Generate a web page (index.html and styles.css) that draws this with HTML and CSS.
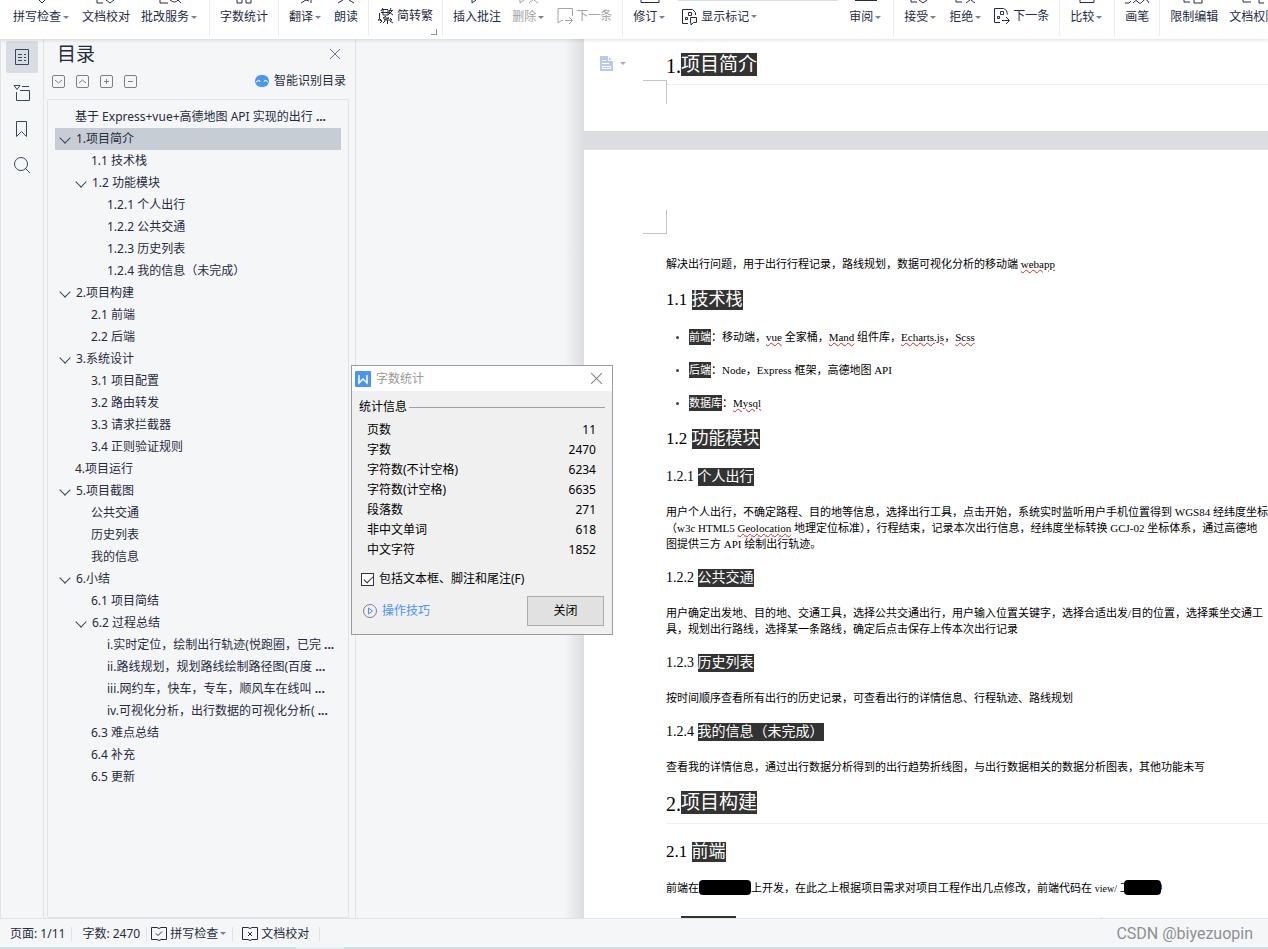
FILE: index.html
```html
<!DOCTYPE html>
<html lang="zh-CN">
<head>
<meta charset="utf-8">
<title>文档审阅</title>
<link rel="stylesheet" href="styles.css">
</head>
<body>
<header class="ribbon">
  <div class="group">
    <button class="tool"><svg class="stub" viewBox="0 0 24 4"><path d="M9 0l3 3 3-3"/></svg><span class="caret">拼写检查</span></button>
    <button class="tool"><svg class="stub" viewBox="0 0 24 4"><path d="M3 0v3h6M12 0l4 3 4-3"/></svg><span>文档校对</span></button>
    <button class="tool"><svg class="stub" viewBox="0 0 24 4"><path d="M2 0v3h8M12 0q5 4 8 0M20 0l3 3"/></svg><span class="caret">批改服务</span></button>
  </div>
  <div class="group">
    <button class="tool"><svg class="stub" viewBox="0 0 24 4"><path d="M5 0v3h5V0M14 0v3h5V0"/></svg><span>字数统计</span></button>
  </div>
  <div class="group">
    <button class="tool"><svg class="stub" viewBox="0 0 24 4"><path d="M7 3l5-3 3 1M17 0v3"/></svg><span class="caret">翻译</span></button>
    <button class="tool"><svg class="stub" viewBox="0 0 24 4"><path d="M4 3l5-3M15 0l5 3"/></svg><span>朗读</span></button>
  </div>
  <div class="group group-corner">
    <button class="tool tool-row"><svg class="ico" viewBox="0 0 16 16"><path d="M5 0L3 3M4 1.500h6M3 4.500h8M5 2v5h5V2M13 0l-2 4M11 2.500h4M14 3l-4 4M11 4l4 3M8 8L5 10h6l-5 2h8M12 10l2 2M9.500 12v4M7 13l-2 2M12 13l3 2M1.500 5v5q0 3 2 3M0 11l1 2M2 15l2-2-2-2"/></svg><span>简转繁</span></button>
  </div>
  <div class="group">
    <button class="tool"><svg class="stub" viewBox="0 0 24 4"><path d="M7 0v3l4-3"/></svg><span>插入批注</span></button>
    <button class="tool muted"><svg class="stub" viewBox="0 0 24 4"><path d="M3 0v3l4-3M12 3l4-3M17 0l4 3"/></svg><span class="caret">删除</span></button>
    <button class="tool tool-row muted"><svg class="ico" viewBox="0 0 16 16"><path d="M6 12.500H4.500L1 15V.5h14.500V8M8 12.500h7M12 9l3.500 3.500L12 16"/></svg><span>下一条</span></button>
  </div>
  <div class="group">
    <button class="tool"><svg class="stub" viewBox="0 0 24 4"><path d="M3 0v2.500h18V0"/></svg><span class="caret">修订</span></button>
    <div class="stack">
      <button class="tool tool-row"><svg class="ico" viewBox="0 0 16 16"><path d="M6 14.500H.5V.5h10l3 3V6M6.500 3.500h3v3h-3zM3.500 8.500h2v2h-2zM8.500 8.500h6v5h-3L9 16v-2.500h-.5z"/></svg><span class="caret">显示标记</span></button>
    </div>
    <button class="tool"><svg class="stub" viewBox="0 0 24 4"><path d="M1 0h22" stroke-width="2"/></svg><span class="caret">审阅</span></button>
  </div>
  <div class="group">
    <button class="tool"><svg class="stub" viewBox="0 0 24 4"><path d="M2 0v2h6M10 0l4 3 4-3"/></svg><span class="caret">接受</span></button>
    <button class="tool"><svg class="stub" viewBox="0 0 24 4"><path d="M2 0v2h6M12 3l4-3M17 0l4 3"/></svg><span class="caret">拒绝</span></button>
    <button class="tool tool-row"><svg class="ico" viewBox="0 0 16 16"><path d="M6 14.500H.5V.5h9q4 1 4 6M6.500 3.500h3v3h-3zM3.500 8.500h2v2h-2zM8 12.500h7M12 9l3.500 3.500L12 16"/></svg><span>下一条</span></button>
  </div>
  <div class="group">
    <button class="tool"><svg class="stub" viewBox="0 0 24 4"><path d="M5 0v2.500h14V0"/></svg><span class="caret">比较</span></button>
  </div>
  <div class="group">
    <button class="tool"><svg class="stub" viewBox="0 0 24 4"><path d="M0 3q5 1 6-2M8 3q3-4 5-1t5-1 6 2"/></svg><span>画笔</span></button>
  </div>
  <div class="group">
    <button class="tool"><svg class="stub" viewBox="0 0 24 4"><path d="M2 0v2h6M12 0v3h8V0"/></svg><span>限制编辑</span></button>
    <button class="tool"><svg class="stub" viewBox="0 0 24 4"><path d="M2 0v2h8M18 0v3h5"/></svg><span>文档权限</span></button>
  </div>
</header>

<div class="workspace">
  <nav class="rail" aria-label="侧栏">
    <button class="rail-btn active" aria-label="目录"><svg viewBox="0 0 18 18"><path d="M2.500 1.500h13v15h-13zM5 6.500h4M11 6.500h2M5 9.500h4M11 9.500h2M5 12.500h4M11 12.500h2"/></svg></button>
    <button class="rail-btn" aria-label="章节"><svg viewBox="0 0 18 18"><path d="M1 1.500h6L4 5.500zM3.500 8v8.500h13v-10H7M9 2.500h7"/></svg></button>
    <button class="rail-btn" aria-label="书签"><svg viewBox="0 0 18 18"><path d="M3.500 1.500h10v15l-5-5-5 5z"/></svg></button>
    <button class="rail-btn" aria-label="查找"><svg viewBox="0 0 18 18"><circle cx="8" cy="8" r="6.500"/><path d="M12 12l5 5"/></svg></button>
  </nav>

  <aside class="outline">
    <div class="outline-head">
      <h2 class="outline-title">目录</h2>
      <button class="close" aria-label="关闭目录"><svg viewBox="0 0 10 10"><path d="M0 0l10 10M10 0L0 10"/></svg></button>
    </div>
    <div class="outline-tools">
      <button class="sq" aria-label="展开"><svg viewBox="0 0 11 11"><path d="M2 4l3.500 3L9 4"/></svg></button>
      <button class="sq" aria-label="收起"><svg viewBox="0 0 11 11"><path d="M2 7l3.500-3L9 7"/></svg></button>
      <button class="sq" aria-label="增加"><svg viewBox="0 0 11 11"><path d="M3 5.500h5M5.500 3v5"/></svg></button>
      <button class="sq" aria-label="减少"><svg viewBox="0 0 11 11"><path d="M3 5.500h5"/></svg></button>
      <button class="smart"><svg viewBox="0 0 14 12"><rect width="14" height="12" rx="6" fill="#4a96f0"/><path d="M1 7l3-2 1 2M9 7l1-2 3 2" fill="none" stroke="#fff"/></svg>智能识别目录</button>
    </div>
    <ul class="tree">
      <li class="l1">基于 Express+vue+高德地图 API 实现的出行 <b>...</b></li>
      <li class="l1 open current">1.项目简介</li>
      <li class="l2">1.1 技术栈</li>
      <li class="l2 open">1.2 功能模块</li>
      <li class="l3">1.2.1 个人出行</li>
      <li class="l3">1.2.2 公共交通</li>
      <li class="l3">1.2.3 历史列表</li>
      <li class="l3">1.2.4 我的信息（未完成）</li>
      <li class="l1 open">2.项目构建</li>
      <li class="l2">2.1 前端</li>
      <li class="l2">2.2 后端</li>
      <li class="l1 open">3.系统设计</li>
      <li class="l2">3.1 项目配置</li>
      <li class="l2">3.2 路由转发</li>
      <li class="l2">3.3 请求拦截器</li>
      <li class="l2">3.4 正则验证规则</li>
      <li class="l1">4.项目运行</li>
      <li class="l1 open">5.项目截图</li>
      <li class="l2">公共交通</li>
      <li class="l2">历史列表</li>
      <li class="l2">我的信息</li>
      <li class="l1 open">6.小结</li>
      <li class="l2">6.1 项目简结</li>
      <li class="l2 open">6.2 过程总结</li>
      <li class="l3">i.实时定位，绘制出行轨迹(悦跑圈，已完 <b>...</b></li>
      <li class="l3">ii.路线规划，规划路线绘制路径图(百度 <b>...</b></li>
      <li class="l3">iii.网约车，快车，专车，顺风车在线叫 <b>...</b></li>
      <li class="l3">iv.可视化分析，出行数据的可视化分析( <b>...</b></li>
      <li class="l2">6.3 难点总结</li>
      <li class="l2">6.4 补充</li>
      <li class="l2">6.5 更新</li>
    </ul>
  </aside>

  <main class="canvas">
    <section class="page page-first">
      <div class="gutter">
        <button class="para-menu caret" aria-label="段落布局"><svg viewBox="0 0 13 15"><path d="M0 0h8l5 5v10H0z" fill="#b9cbe8"/><path d="M8.500 0v4.500H13M2 4.500h4M2 7.500h7M2.500 10.500h8v2h-8z" fill="none" stroke="#fff"/></svg></button>
        <i class="crop crop-end"></i>
      </div>
      <div class="text">
        <h1>1.<mark>项目简介</mark></h1>
      </div>
    </section>
    <section class="page page-second">
      <div class="gutter"><i class="crop crop-start"></i></div>
      <div class="text">
        <p>解决出行问题，用于出行行程记录，路线规划，数据可视化分析的移动端 <u>webapp</u></p>
        <h2>1.1 <mark>技术栈</mark></h2>
        <ul class="stack-list">
          <li><mark>前端</mark>：移动端，<u>vue</u> 全家桶，<u>Mand</u> 组件库，<u>Echarts.js</u>，<u>Scss</u></li>
          <li><mark>后端</mark>：Node，Express 框架，高德地图 API</li>
          <li><mark>数据库</mark>：<u>Mysql</u></li>
        </ul>
        <h2>1.2 <mark>功能模块</mark></h2>
        <h3>1.2.1 <mark>个人出行</mark></h3>
        <p>用户个人出行，不确定路程、目的地等信息，选择出行工具，点击开始，系统实时监听用户手机位置得到 WGS84 经纬度坐标<br>（w3c HTML5 <u>Geolocation</u> 地理定位标准），行程结束，记录本次出行信息，经纬度坐标转换 GCJ-02 坐标体系，通过高德地<br>图提供三方 API 绘制出行轨迹。</p>
        <h3>1.2.2 <mark>公共交通</mark></h3>
        <p>用户确定出发地、目的地、交通工具，选择公共交通出行，用户输入位置关键字，选择合适出发/目的位置，选择乘坐交通工<br>具，规划出行路线，选择某一条路线，确定后点击保存上传本次出行记录</p>
        <h3>1.2.3 <mark>历史列表</mark></h3>
        <p>按时间顺序查看所有出行的历史记录，可查看出行的详情信息、行程轨迹、路线规划</p>
        <h3>1.2.4 <mark>我的信息（未完成）</mark></h3>
        <p>查看我的详情信息，通过出行数据分析得到的出行趋势折线图，与出行数据相关的数据分析图表，其他功能未写</p>
        <h1>2.<mark>项目构建</mark></h1>
        <h2>2.1 <mark>前端</mark></h2>
        <p>前端在<span class="redact redact-wide"></span>上开发，在此之上根据项目需求对项目工程作出几点修改，前端代码在 <small>view/</small> 工<span class="redact"></span>中</p>
        <ul class="stack-list stack-tight">
          <li><mark>移动端适配</mark>：在前端移动端页面，在前端移动端前端页面中适配方案，在项目根据中选择，使用文件，项目文件配置中，实现</li>
        </ul>
      </div>
    </section>
  </main>
</div>

<footer class="status">
  <button class="cell">页面: 1/11</button>
  <button class="cell">字数: 2470</button>
  <button class="cell cell-icon"><svg viewBox="0 0 16 14"><path d="M6 .5H.5v12H6l2 1 2-1h5.500V.5H10l-2 1zM5 6.500l2 2 4-4"/></svg><span class="caret">拼写检查</span></button>
  <button class="cell cell-last"><svg viewBox="0 0 16 14"><path d="M6 .5H.5v12H6l2 1 2-1h5.500V.5H10l-2 1zM6 5l4 4M10 5L6 9"/></svg>文档校对</button>
  <span class="credit">CSDN @biyezuopin</span>
</footer>
<div class="scroll-strip"><i></i></div>

<section class="dialog" role="dialog" aria-label="字数统计">
  <div class="dialog-head">
    <svg class="logo" viewBox="0 0 16 16"><rect width="16" height="16" rx="1" fill="#4a94f5"/><path d="M4 4v8l4-4 4 4V4" fill="none" stroke="#fff" stroke-width="1.500"/></svg>
    <span class="dialog-title">字数统计</span>
    <button class="close" aria-label="关闭窗口"><svg viewBox="0 0 10 10"><path d="M0 0l10 10M10 0L0 10"/></svg></button>
  </div>
  <div class="dialog-body">
    <div class="legend">统计信息</div>
    <table class="counts">
      <tr><th>页数</th><td>11</td></tr>
      <tr><th>字数</th><td>2470</td></tr>
      <tr><th>字符数(不计空格)</th><td>6234</td></tr>
      <tr><th>字符数(计空格)</th><td>6635</td></tr>
      <tr><th>段落数</th><td>271</td></tr>
      <tr><th>非中文单词</th><td>618</td></tr>
      <tr><th>中文字符</th><td>1852</td></tr>
    </table>
    <label class="option"><input type="checkbox" checked>包括文本框、脚注和尾注(F)</label>
    <div class="dialog-foot">
      <a class="tips" href="#"><svg viewBox="0 0 14 14"><circle cx="7" cy="7" r="6.500" stroke="#7a828c"/><path d="M5.500 4v6l4-3z" stroke="#4a94f5"/></svg>操作技巧</a>
      <button class="ok">关闭</button>
    </div>
  </div>
</section>
</body>
</html>
```

FILE: styles.css
```css
* { box-sizing: border-box; }

body {
  margin: 0;
  height: 100vh;
  display: flex;
  flex-direction: column;
  overflow: hidden;
  background: #f5f6f8;
  color: #262b3f;
  font: 12px/16px "Noto Sans", "Noto Sans CJK SC", sans-serif;
}

button {
  margin: 0;
  padding: 0;
  border: 0;
  background: none;
  color: inherit;
  font: inherit;
  white-space: nowrap;
}

svg {
  display: block;
  flex: none;
  fill: none;
  stroke: currentColor;
}

/* Ribbon */
.ribbon {
  position: relative;
  z-index: 2;
  flex: none;
  height: 39px;
  display: flex;
  padding-left: 3px;
  background: #fff;
  box-shadow: 0 1px 4px rgba(0, 0, 0, 0.14);
}

.group {
  flex: none;
  display: flex;
  gap: 11px;
  height: 36px;
  padding: 0 10px;
  border-right: 1px solid #ebecef;
}

.group-corner {
  position: relative;
  padding: 0 9px;
}

.group-corner::after {
  content: "";
  position: absolute;
  right: 5px;
  bottom: 1px;
  width: 5px;
  height: 5px;
  border: solid #8a8fa3;
  border-width: 0 1px 1px 0;
}

.tool {
  display: flex;
  flex-direction: column;
  align-items: center;
  gap: 5px;
  height: 25px;
}

.tool-row {
  flex-direction: row;
  gap: 3px;
  height: 31px;
}

.muted { color: #a3a3a3; }

.stub {
  width: 24px;
  height: 4px;
}

.ico {
  width: 16px;
  height: 16px;
}

.stack {
  width: 160px;
  padding-left: 4px;
  border-top: 1px solid #dcdee3;
}

.caret {
  display: flex;
  align-items: center;
  gap: 2px;
}

.caret::after {
  content: "";
  margin-right: 2px;
  border: solid transparent;
  border-width: 3px 3px 0;
  border-top-color: #7b8099;
}

/* Work area */
.workspace {
  flex: 1;
  min-height: 0;
  display: flex;
}

.rail {
  flex: none;
  width: 44px;
  display: flex;
  flex-direction: column;
  align-items: center;
  gap: 4px;
  padding-top: 2px;
  border: solid #e1e3e8;
  border-width: 0 1px;
  color: #3a4660;
}

.rail-btn {
  width: 32px;
  height: 32px;
  display: grid;
  place-items: center;
  border-radius: 2px;
}

.rail-btn.active { background: #d8dde4; }

.rail-btn svg {
  width: 18px;
  height: 18px;
}

.outline {
  flex: none;
  width: 312px;
  display: flex;
  flex-direction: column;
  padding: 0 6px 0 3px;
  border-right: 1px solid #e1e3e8;
}

.outline-head {
  display: flex;
  justify-content: space-between;
  align-items: center;
  height: 30px;
  padding: 0 9px 0 10px;
}

.outline-title {
  margin: 0;
  font-size: 19px;
  font-weight: 400;
  line-height: 30px;
}

.close { color: #6a7290; }

.close svg {
  width: 10px;
  height: 10px;
}

.outline-tools {
  display: flex;
  align-items: center;
  gap: 11px;
  height: 24px;
  padding: 0 3px 0 5px;
}

.sq {
  width: 13px;
  height: 13px;
  border: 1px solid #7c7f86;
  border-radius: 2px;
  color: #7c7f86;
}

.sq svg {
  width: 11px;
  height: 11px;
}

.smart {
  display: flex;
  align-items: center;
  gap: 5px;
  margin-left: auto;
}

.smart svg {
  width: 14px;
  height: 12px;
  stroke: none;
}

.tree {
  flex: 1;
  min-height: 0;
  margin: 6px 0 0;
  padding: 6px 7px;
  border: 1px solid #e1e3e8;
  border-radius: 2px;
  list-style: none;
  overflow: hidden;
}

.tree li {
  height: 22px;
  line-height: 22px;
  white-space: nowrap;
}

.l1 { padding-left: 20px; }
.l2 { padding-left: 36px; }
.l3 { padding-left: 52px; }

.open::before {
  content: "";
  display: inline-block;
  width: 7px;
  height: 7px;
  margin: 0 7px 4px -14px;
  border: solid #3a4660;
  border-width: 0 1px 1px 0;
  transform: rotate(45deg);
  vertical-align: middle;
}

.current { background: #c7cdd5; }

/* Document */
.canvas {
  flex: 1;
  min-width: 0;
  display: flex;
  flex-direction: column;
  gap: 19px;
  padding-left: 228px;
  overflow: hidden;
  background: linear-gradient(90deg, #f5f6f8 208px, #dcdde0 228px);
  color: #000;
  font-family: "Liberation Serif", "Noto Sans CJK SC", serif;
}

.page {
  flex: none;
  display: grid;
  grid-template-columns: 82px 1fr;
  background: #fff;
}

.page-first { height: 92px; }

.page-second {
  flex: 1;
  min-height: 0;
  overflow: hidden;
}

.gutter { position: relative; }

.para-menu {
  gap: 7px;
  margin: 17px 0 0 16px;
}

.para-menu::after { border-top-color: #a9abb0; }

.para-menu svg {
  width: 13px;
  height: 15px;
  stroke: none;
}

.crop {
  position: absolute;
  right: -1px;
  width: 24px;
  height: 24px;
  border: 0 solid #c4c4c4;
}

.crop-end {
  top: 41px;
  border-width: 1px 1px 0 0;
}

.crop-start {
  top: 60px;
  border-width: 0 1px 1px 0;
}

.text {
  min-width: 0;
  overflow: hidden;
  white-space: nowrap;
}

.page-first .text { padding-top: 14px; }
.page-second .text { padding-top: 106px; }

.text h1,
.text h2,
.text h3,
.text p {
  margin: 0;
  font-weight: 400;
}

.text mark {
  display: inline-block;
  background: #333;
  color: #fff;
}

.text h1 {
  height: 33px;
  border-bottom: 1px solid #eee;
  font-size: 20px;
  line-height: 26px;
}

.text h1 mark {
  font-size: 19px;
  line-height: 23px;
  vertical-align: top;
}

.page-first h1 { height: 32px; }

.text h2 {
  margin-top: 18px;
  font-size: 17px;
  line-height: 20px;
}

.text h2 mark,
.text h3 mark { vertical-align: top; }

.text h3 {
  margin-top: 17px;
  font-size: 14px;
  line-height: 18px;
}

.text p,
.stack-list {
  font-size: 11px;
  line-height: 16px;
}

.text h2 + h3 { margin-top: 19px; }

.text h3 + p,
.text h2 + p { margin-top: 18px; }

.text p + h1 { margin-top: 16px; }

.stack-list {
  display: grid;
  gap: 17px;
  margin: 19px 0 17px;
  padding: 0;
  list-style: none;
}

.stack-list li {
  display: flex;
  align-items: center;
  padding-left: 10px;
  white-space: pre;
}

.stack-list li::before {
  content: "";
  width: 3px;
  height: 3px;
  margin-right: 10px;
  border-radius: 50%;
  background: #444;
}

.stack-tight li { padding-left: 2px; }

.stack-list u,
.text p u {
  text-decoration: underline wavy #e02020 1px;
  text-underline-offset: 1px;
}

.text small { font-size: 10px; }

.redact {
  position: relative;
  display: inline-block;
  width: 37px;
  height: 15px;
  margin: 0 -9px 0 -7px;
  border-radius: 4px;
  background: #000;
  vertical-align: top;
}

.redact-wide {
  width: 52px;
  margin: 0;
}

/* Status bar */
.status {
  flex: none;
  height: 29px;
  display: flex;
  align-items: center;
  padding: 1px 15px 0 0;
  border-top: 1px solid #e1e3e8;
}

.cell {
  display: flex;
  align-items: center;
  gap: 3px;
  height: 14px;
  padding: 0 6px 0 10px;
  border-right: 1px solid #dfe1e6;
}

.cell-icon { padding: 0 4px; }
.cell-last { padding: 0 10px 0 9px; }

.cell svg {
  width: 16px;
  height: 14px;
}

.credit {
  margin-left: auto;
  color: #8d9094;
  font: 16px/20px Roboto, "Liberation Sans", sans-serif;
}

.scroll-strip {
  flex: none;
  height: 2px;
  padding-left: 296px;
  background: #cbdfe5;
}

.scroll-strip i {
  display: block;
  width: 48px;
  height: 2px;
  background: #e8f0f3;
}

/* Word count dialog */
.dialog {
  position: absolute;
  z-index: 3;
  left: 351px;
  top: 365px;
  width: 262px;
  border: 1px solid #9a9c9f;
  background: #f0f0f0;
  color: #000;
}

.dialog-head {
  display: flex;
  align-items: center;
  gap: 5px;
  height: 25px;
  padding: 0 10px 0 3px;
  background: #fff;
}

.logo {
  width: 16px;
  height: 16px;
  stroke: none;
}

.dialog-title {
  flex: 1;
  color: #999;
}

.dialog .close { color: #888; }

.dialog .close svg {
  width: 11px;
  height: 11px;
}

.dialog-body { padding: 8px 7px; }

.legend {
  display: flex;
  align-items: center;
  gap: 2px;
}

.legend::after {
  content: "";
  flex: 1;
  border-top: 1px solid #a0a0a0;
}

.counts {
  width: 100%;
  margin: 5px 0 0;
  border-collapse: collapse;
}

.counts th,
.counts td {
  height: 20px;
  padding: 0 9px 0 8px;
  font-weight: 400;
  text-align: left;
}

.counts td { text-align: right; }

.option {
  display: flex;
  align-items: center;
  gap: 5px;
  margin: 11px 2px 9px;
}

.option input {
  appearance: none;
  width: 13px;
  height: 13px;
  margin: 0;
  border: 1px solid #333;
  background: #fff;
}

.option input:checked::before {
  content: "";
  display: block;
  width: 8px;
  height: 4px;
  margin: 2px 0 0 2px;
  border: solid #333;
  border-width: 0 0 1px 1px;
  transform: rotate(-45deg);
}

.dialog-foot {
  display: flex;
  justify-content: space-between;
  align-items: center;
  padding: 0 1px 0 4px;
}

.tips {
  display: flex;
  align-items: center;
  gap: 5px;
  color: #4a94f5;
  text-decoration: none;
}

.tips svg {
  width: 14px;
  height: 14px;
}

.ok {
  width: 77px;
  height: 30px;
  border: 1px solid #adadad;
  background: #e1e1e1;
}
```
